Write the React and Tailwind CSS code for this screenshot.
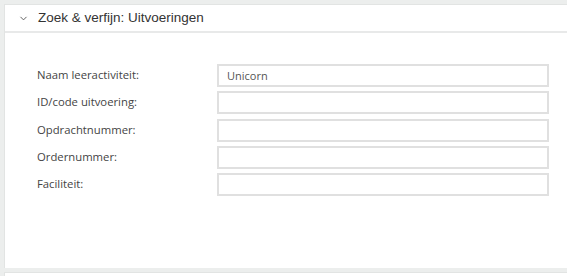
import { ChevronDown } from 'lucide-react'

const FIELDS = [
  { label: 'Naam leeractiviteit:', value: 'Unicorn' },
  { label: 'ID/code uitvoering:', value: '' },
  { label: 'Opdrachtnummer:', value: '' },
  { label: 'Ordernummer:', value: '' },
  { label: 'Faciliteit:', value: '' },
]

export default function App() {
  return (
    <div className="h-[276px] w-[567px] overflow-hidden bg-[#eceeed] pl-[4px] pt-[4px] font-['Open_Sans',sans-serif] text-[#333]">
      <div className="-mr-4 h-[264px] border-l border-t border-[#e2e4e3] bg-white">
        <div className="flex h-[28px] items-center border-b-2 border-[#e8e9e9] pl-[13px]">
          <ChevronDown className="h-[11px] w-[11px] text-[#555]" strokeWidth={2} />
          <span className="ml-[9px] font-['Liberation_Sans',sans-serif] text-[13.5px] text-[#333]">Zoek &amp; verfijn: Uitvoeringen</span>
        </div>
        <div className="flex flex-col gap-[4.3px] pl-[32px] pt-[31px]">
          {FIELDS.map(f => (
            <div key={f.label} className="flex h-[23px] items-center">
              <label className="w-[180px] text-[11.3px] text-[#444]">{f.label}</label>
              <input
                readOnly
                value={f.value}
                className="h-[23px] w-[332px] border-2 border-[#e0e0e0] bg-white px-[8px] text-[11px] text-[#555] outline-none"
              />
            </div>
          ))}
        </div>
      </div>
      <div className="mt-[4px] h-[20px] border-l border-t border-[#e2e4e3] bg-white"></div>
    </div>
  )
}
